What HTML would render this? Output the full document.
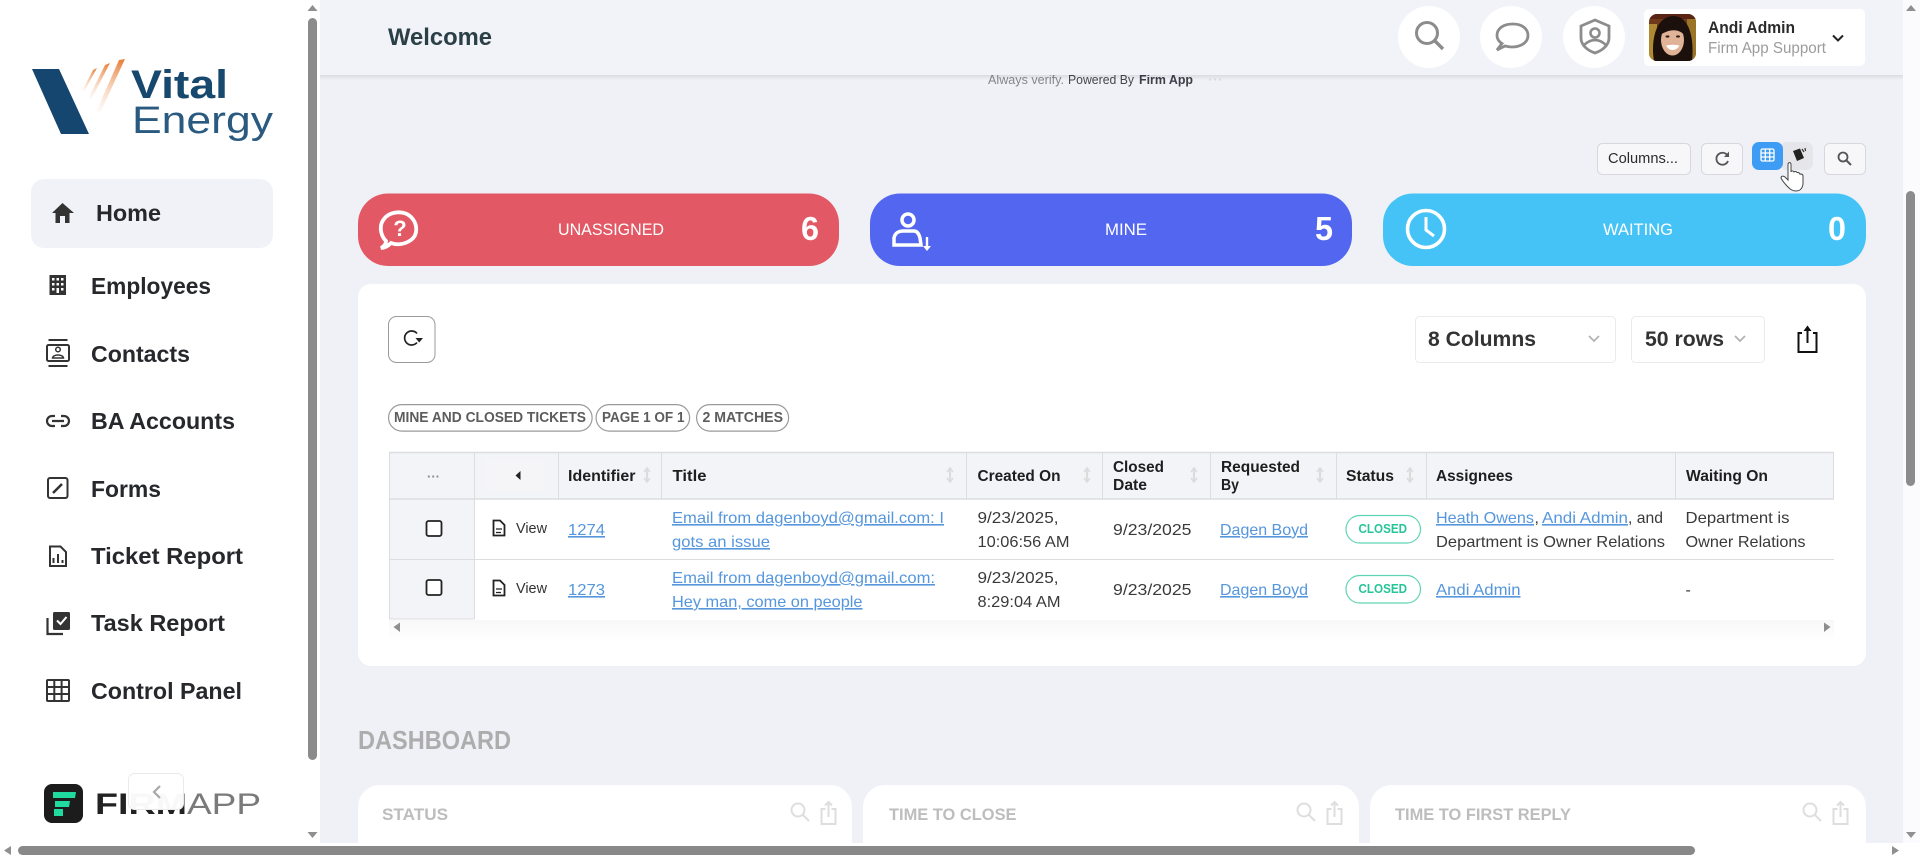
<!DOCTYPE html>
<html lang="en"><head><meta charset="utf-8"><title>Welcome</title>
<style>
html,body{margin:0;padding:0;width:1920px;height:858px;overflow:hidden;background:#f0f1f7}
svg{display:block;position:absolute;left:0;top:0;font-family:"Liberation Sans",Arial,sans-serif;filter:blur(.35px)}
.nav{font-size:23px;font-weight:700;fill:#26282c}
.th{font-size:16px;font-weight:700;fill:#1e1e1e}
.td{font-size:16px;fill:#3a3a3a}
.lk{font-size:16px;fill:#5596dc;text-decoration:underline}
.chip{font-size:14.5px;font-weight:700;fill:#5c5c5c}
.pill{font-size:12.5px;font-weight:700;fill:#27c49a}
.cl{font-size:17px;fill:#fff}
.num{font-size:33px;font-weight:700;fill:#fff}
.dl{font-size:17px;font-weight:700;fill:#bdbdbd}
</style></head><body>
<svg width="1920" height="858" viewBox="0 0 1920 858" xmlns="http://www.w3.org/2000/svg">
<defs>
<linearGradient id="or1" gradientUnits="userSpaceOnUse" x1="122" y1="60" x2="97" y2="112"><stop offset="0" stop-color="#e8803a"/><stop offset="1" stop-color="#f6d3bb" stop-opacity=".1"/></linearGradient>
<linearGradient id="or2" gradientUnits="userSpaceOnUse" x1="110" y1="64" x2="90" y2="100"><stop offset="0" stop-color="#e8803a"/><stop offset="1" stop-color="#f6d3bb" stop-opacity=".1"/></linearGradient>
<linearGradient id="or3" gradientUnits="userSpaceOnUse" x1="97" y1="69" x2="83" y2="92"><stop offset="0" stop-color="#e8803a"/><stop offset="1" stop-color="#f6d3bb" stop-opacity=".15"/></linearGradient>
<linearGradient id="hs" x1="0" y1="0" x2="0" y2="1"><stop offset="0" stop-color="#000" stop-opacity=".09"/><stop offset="1" stop-color="#000" stop-opacity="0"/></linearGradient>
<linearGradient id="fd" x1="0" y1="0" x2="0" y2="1"><stop offset="0" stop-color="#f8f8f8"/><stop offset="1" stop-color="#fff"/></linearGradient>
<clipPath id="av"><rect x="1649" y="14" width="47" height="47" rx="8"/></clipPath>
<g id="sort" fill="none" stroke="#dcdcdc" stroke-width="2.2"><path d="M0-6V6"/><path d="M-3-3 0-7 3-3M-3 3 0 7 3 3" stroke-width="1.6"/></g>
<g id="mag" fill="none" stroke="#dedede" stroke-width="2"><circle cx="-2" cy="-2" r="6.5"/><path d="M2.800 2.800 9 9"/></g>
<g id="shr" fill="none" stroke="#dedede" stroke-width="2"><path d="M-3-4H-7V11H7V-4H3M0 4V-11M-3.500-7.500 0-11 3.500-7.500"/></g>
</defs>

<!-- main background -->
<rect width="1920" height="858" fill="#f0f1f7"/>

<!-- powered by -->
<text x="988" y="84" font-size="12.500" fill="#85878d" textLength="76" lengthAdjust="spacingAndGlyphs">Always verify.</text>
<text x="1068" y="84" font-size="12.500" fill="#45474d" textLength="66" lengthAdjust="spacingAndGlyphs">Powered By</text>
<text x="1139" y="84" font-size="12.500" font-weight="700" fill="#3c4048" textLength="54" lengthAdjust="spacingAndGlyphs">Firm App</text>
<text x="1208" y="84" font-size="13" font-weight="700" fill="#dcdde2" textLength="15" lengthAdjust="spacingAndGlyphs">···</text>

<!-- header -->
<rect x="320" y="0" width="1583" height="75" fill="#f2f3f8"/>
<rect x="320" y="75" width="1583" height="5" fill="url(#hs)"/>
<text x="388" y="45" font-size="24" font-weight="700" fill="#2b3f47" textLength="104" lengthAdjust="spacingAndGlyphs">Welcome</text>
<circle cx="1429" cy="37" r="31" fill="#fff"/><circle cx="1511" cy="37" r="31" fill="#fff"/><circle cx="1594" cy="37" r="31" fill="#fff"/>
<g fill="none" stroke="#8c8c8c" stroke-width="3">
<circle cx="1427" cy="33" r="10.500"/><path d="M1435 41 1443 49" stroke-width="3.400"/>
<path d="M1497 50 1502 43.500C1498 41 1497 38 1497 35.500 1497 28 1504 24 1513 24 1521 24 1528 28 1528 35.500 1528 43 1520 47 1512 47 1509 47 1507 46.500 1505 46Z" stroke-width="2.800"/>
<path d="M1595 20 1609 26V38C1609 46 1601 51 1595 53 1589 51 1581 46 1581 38V26Z" stroke-width="2.800"/><circle cx="1595" cy="33" r="4.500" stroke-width="2.600"/><path d="M1584 45Q1595 35 1606 45" stroke-width="2.600"/>
</g>
<rect x="1644" y="9" width="221" height="57" rx="5" fill="#fff"/>
<g clip-path="url(#av)">
<rect x="1649" y="14" width="47" height="47" fill="#6e3a1c"/><rect x="1649" y="24" width="8" height="37" fill="#b08a32"/><rect x="1687" y="14" width="9" height="47" fill="#9a7426"/><rect x="1649" y="14" width="47" height="5" fill="#5a2414"/>
<path d="M1654 61C1651 44 1654 17 1673 16 1691 16 1694 42 1692 61Z" fill="#1c100d"/>
<ellipse cx="1672.500" cy="40" rx="11.500" ry="15.500" fill="#e0b298"/>
<path d="M1660 35C1664 25 1671 23 1675 24 1680 25 1684 29 1685 36 1680 29 1671 28 1660 35Z" fill="#1c100d"/>
<ellipse cx="1667.500" cy="36.500" rx="2" ry="1.100" fill="#33201a"/><ellipse cx="1678" cy="36.500" rx="2" ry="1.100" fill="#33201a"/>
<path d="M1666 45.500Q1672.500 44 1679.500 45.500 1677 50 1672.500 50 1668.500 50 1666 45.500Z" fill="#fff"/>
</g>
<text x="1708" y="33" font-size="16.500" font-weight="700" fill="#2b2b2b" textLength="87" lengthAdjust="spacingAndGlyphs">Andi Admin</text>
<text x="1708" y="53" font-size="15.500" fill="#9c9c9c" textLength="118" lengthAdjust="spacingAndGlyphs">Firm App Support</text>
<path d="M1833 35.500 1838 40.500 1843 35.500" fill="none" stroke="#222" stroke-width="2"/>

<!-- toolbar -->
<rect x="1597.500" y="143.500" width="93" height="31" rx="5" fill="#f7f7fa" stroke="#d8d8dc"/>
<text x="1608" y="163" font-size="15" fill="#2b2b2b" textLength="70" lengthAdjust="spacingAndGlyphs">Columns...</text>
<rect x="1701.500" y="143.500" width="41" height="31" rx="5" fill="#f7f7fa" stroke="#d8d8dc"/>
<path d="M1727.500 155.500A6 6 0 1 0 1728 161" fill="none" stroke="#555" stroke-width="1.800"/><path d="M1729 151.500V157H1724Z" fill="#555"/>
<rect x="1780" y="142" width="33" height="28" rx="7" fill="#e6e6ea"/>
<rect x="1752" y="142" width="31" height="28" rx="7" fill="#3f9cf5"/>
<g fill="none" stroke="#fff" stroke-width="1.300"><rect x="1761" y="149" width="13" height="12" rx="1.500"/><path d="M1765.300 149V161M1769.700 149V161M1761 153H1774M1761 157H1774"/></g>
<path d="M1793 151 1800 148.500 1804 158 1797 161Z" fill="#222"/><path d="M1802 149 1804 152M1805 148 1805.500 151" stroke="#333" stroke-width="1.200"/>
<path d="M1788 187C1785 184 1782 180 1781 178 1781 176 1783 175.500 1785 177L1788 180V164.500C1788 162 1791 162 1791 164.500V172C1791 170.500 1794 170.500 1794 172.500 1794 171 1797 171 1797 173 1797 172 1800 172.500 1800 174.500 1800.500 173.500 1803 174 1803 176V183C1803 187 1801 191 1796 191 1792 191 1790 189 1788 187Z" fill="#fff" stroke="#444" stroke-width="1"/>
<rect x="1824.500" y="143.500" width="41" height="31" rx="5" fill="#f7f7fa" stroke="#d8d8dc"/>
<circle cx="1843" cy="157" r="4.500" fill="none" stroke="#555" stroke-width="1.800"/><path d="M1846.500 160.500 1851 165" stroke="#555" stroke-width="2"/>

<!-- stat cards -->
<rect x="358" y="193.500" width="481" height="72.500" rx="30" fill="#e25864"/>
<rect x="870" y="193.500" width="482" height="72.500" rx="30" fill="#5366f0"/>
<rect x="1383" y="193.500" width="483" height="72.500" rx="30" fill="#45c3f6"/>
<path d="M381 248C385 246 386 243 386 241 380 235 379 225 384 219 390 211 404 210 411 217 418 224 418 235 411 240 404 245 396 245 391 243 388 246 385 248 381 248Z" fill="none" stroke="#fff" stroke-width="3.800"/>
<text x="400" y="236" font-size="22" font-weight="700" fill="#fff" text-anchor="middle">?</text>
<text x="558" y="235" class="cl" textLength="106" lengthAdjust="spacingAndGlyphs">UNASSIGNED</text>
<text x="801" y="240" class="num" textLength="18" lengthAdjust="spacingAndGlyphs">6</text>
<g fill="none" stroke="#fff"><circle cx="908" cy="220" r="6" stroke-width="3.500"/><path d="M894 245V238C895 233 899 231 903 231H914C917 231 919 234 920 238L921 245Z" stroke-width="3.500"/><path d="M927 237V248" stroke-width="2.400"/></g><path d="M923 246H931L927 251Z" fill="#fff"/>
<text x="1105" y="235" class="cl" textLength="42" lengthAdjust="spacingAndGlyphs">MINE</text>
<text x="1315" y="240" class="num" textLength="18" lengthAdjust="spacingAndGlyphs">5</text>
<circle cx="1426" cy="229" r="18.500" fill="none" stroke="#fff" stroke-width="3.600"/><path d="M1426 217V230L1434 236" fill="none" stroke="#fff" stroke-width="3"/>
<text x="1603" y="235" class="cl" textLength="70" lengthAdjust="spacingAndGlyphs">WAITING</text>
<text x="1828" y="240" class="num" textLength="18" lengthAdjust="spacingAndGlyphs">0</text>

<!-- table panel -->
<rect x="358" y="284" width="1508" height="382" rx="13" fill="#fff"/>
<rect x="388.500" y="316.500" width="46.500" height="46" rx="8" fill="#fff" stroke="#9a9a9a"/>
<path d="M417 333.500A7 7 0 1 0 417 342.500" fill="none" stroke="#222" stroke-width="1.700"/><path d="M415.500 338H423L419.200 342.500Z" fill="#222"/>
<rect x="1415.500" y="316.500" width="200" height="46" rx="4" fill="#fff" stroke="#ebebed"/>
<text x="1428" y="346" font-size="21" font-weight="700" fill="#333" textLength="108" lengthAdjust="spacingAndGlyphs">8 Columns</text>
<path d="M1589 336 1594 341 1599 336" fill="none" stroke="#b3b3b3" stroke-width="1.800"/>
<rect x="1631.500" y="316.500" width="133" height="46" rx="4" fill="#fff" stroke="#ebebed"/>
<text x="1645" y="346" font-size="21" font-weight="700" fill="#333" textLength="79" lengthAdjust="spacingAndGlyphs">50 rows</text>
<path d="M1735 336 1740 341 1745 336" fill="none" stroke="#b3b3b3" stroke-width="1.800"/>
<path d="M1802 333H1798.500V352H1816.500V333H1813M1807.500 343V328" fill="none" stroke="#111" stroke-width="2"/><path d="M1803.500 331 1807.500 325.500 1811.500 331Z" fill="#111"/>

<!-- chips -->
<g fill="#fff" stroke="#9a9a9a" stroke-width="1.200">
<rect x="388.600" y="404.600" width="203.500" height="26.500" rx="13.200"/><rect x="596.100" y="404.600" width="93.500" height="26.500" rx="13.200"/><rect x="696.600" y="404.600" width="92" height="26.500" rx="13.200"/></g>
<text x="394" y="422" class="chip" textLength="192" lengthAdjust="spacingAndGlyphs">MINE AND CLOSED TICKETS</text>
<text x="602" y="422" class="chip" textLength="82.500" lengthAdjust="spacingAndGlyphs">PAGE 1 OF 1</text>
<text x="702.500" y="422" class="chip" textLength="80.500" lengthAdjust="spacingAndGlyphs">2 MATCHES</text>

<!-- table -->
<rect x="389" y="452" width="1445" height="47" fill="#f3f4f8"/>
<rect x="389" y="499" width="85" height="120" fill="#f3f4f8"/>
<g stroke="#dcdde0" fill="none">
<path d="M389 452.500H1834" stroke-width="1.500"/><path d="M389 499H1834" stroke-width="1.500"/><path d="M389 559.500H1834"/><path d="M389 619H474"/>
<path d="M389.500 452V619M474.500 452V619"/>
<path d="M558.500 452V499M661.500 452V499M966.500 452V499M1102.500 452V499M1210.500 452V499M1336.500 452V499M1426.500 452V499M1675.500 452V499M1833.500 452V499"/>
</g>
<rect x="484" y="458" width="60" height="34" fill="#f5f5f8"/>
<text x="433.500" y="481" font-size="13" font-weight="700" fill="#8a8a8a" text-anchor="middle">···</text>
<path d="M520.500 471V480L515.500 475.500Z" fill="#222"/>
<text x="568" y="481" class="th" textLength="67.500" lengthAdjust="spacingAndGlyphs">Identifier</text><use href="#sort" x="647" y="475"/>
<text x="672.500" y="481" class="th" textLength="34" lengthAdjust="spacingAndGlyphs">Title</text><use href="#sort" x="950" y="475"/>
<text x="977.500" y="481" class="th" textLength="83" lengthAdjust="spacingAndGlyphs">Created On</text><use href="#sort" x="1087" y="475"/>
<text x="1113" y="472" class="th" textLength="51" lengthAdjust="spacingAndGlyphs">Closed</text><text x="1113" y="490" class="th" textLength="34" lengthAdjust="spacingAndGlyphs">Date</text><use href="#sort" x="1194" y="475"/>
<text x="1221" y="472" class="th" textLength="79" lengthAdjust="spacingAndGlyphs">Requested</text><text x="1221" y="490" class="th" textLength="18" lengthAdjust="spacingAndGlyphs">By</text><use href="#sort" x="1320" y="475"/>
<text x="1346" y="481" class="th" textLength="48" lengthAdjust="spacingAndGlyphs">Status</text><use href="#sort" x="1410" y="475"/>
<text x="1436" y="481" class="th" textLength="77" lengthAdjust="spacingAndGlyphs">Assignees</text>
<text x="1686" y="481" class="th" textLength="82" lengthAdjust="spacingAndGlyphs">Waiting On</text>

<!-- row 1 -->
<rect x="426.500" y="521" width="15" height="15" rx="2" fill="#fff" stroke="#222" stroke-width="1.800"/>
<rect x="485" y="516" width="67" height="24" rx="5" fill="#fff"/>
<g fill="none" stroke="#222" stroke-width="1.800"><path d="M493.500 521.500V535.500H504.500V525L500 520.500H493.500Z"/><path d="M496 529H502M496 532.500H501" stroke-width="1.300"/></g>
<text x="516" y="533" font-size="15" fill="#333" textLength="31" lengthAdjust="spacingAndGlyphs">View</text>
<text x="568" y="535" class="lk" textLength="37" lengthAdjust="spacingAndGlyphs">1274</text>
<text x="672" y="523" class="lk" textLength="272" lengthAdjust="spacingAndGlyphs">Email from dagenboyd@gmail.com: I</text>
<text x="672" y="547" class="lk" textLength="98" lengthAdjust="spacingAndGlyphs">gots an issue</text>
<text x="977.500" y="523" class="td" textLength="81" lengthAdjust="spacingAndGlyphs">9/23/2025,</text>
<text x="977.500" y="547" class="td" textLength="92" lengthAdjust="spacingAndGlyphs">10:06:56 AM</text>
<text x="1113" y="535" class="td" textLength="78.500" lengthAdjust="spacingAndGlyphs">9/23/2025</text>
<text x="1220" y="535" class="lk" textLength="88" lengthAdjust="spacingAndGlyphs">Dagen Boyd</text>
<rect x="1346" y="515.500" width="74.500" height="27.500" rx="13.700" fill="#fff" stroke="#5fd4b4" stroke-width="1.200"/>
<text x="1358.500" y="533" class="pill" textLength="48.500" lengthAdjust="spacingAndGlyphs">CLOSED</text>
<text x="1436" y="523" class="lk" textLength="98" lengthAdjust="spacingAndGlyphs">Heath Owens</text>
<text x="1534.500" y="523" class="td">,</text>
<text x="1542" y="523" class="lk" textLength="86" lengthAdjust="spacingAndGlyphs">Andi Admin</text>
<text x="1628" y="523" class="td" textLength="35" lengthAdjust="spacingAndGlyphs">, and</text>
<text x="1436" y="547" class="td" textLength="229" lengthAdjust="spacingAndGlyphs">Department is Owner Relations</text>
<text x="1685.500" y="523" class="td" textLength="104" lengthAdjust="spacingAndGlyphs">Department is</text>
<text x="1685.500" y="547" class="td" textLength="120" lengthAdjust="spacingAndGlyphs">Owner Relations</text>

<!-- row 2 -->
<rect x="426.500" y="580" width="15" height="15" rx="2" fill="#fff" stroke="#222" stroke-width="1.800"/>
<rect x="485" y="576" width="67" height="24" rx="5" fill="#fff"/>
<g fill="none" stroke="#222" stroke-width="1.800"><path d="M493.500 581.500V595.500H504.500V585L500 580.500H493.500Z"/><path d="M496 589H502M496 592.500H501" stroke-width="1.300"/></g>
<text x="516" y="593" font-size="15" fill="#333" textLength="31" lengthAdjust="spacingAndGlyphs">View</text>
<text x="568" y="595" class="lk" textLength="37" lengthAdjust="spacingAndGlyphs">1273</text>
<text x="672" y="583" class="lk" textLength="263" lengthAdjust="spacingAndGlyphs">Email from dagenboyd@gmail.com:</text>
<text x="672" y="607" class="lk" textLength="190.500" lengthAdjust="spacingAndGlyphs">Hey man, come on people</text>
<text x="977.500" y="583" class="td" textLength="81" lengthAdjust="spacingAndGlyphs">9/23/2025,</text>
<text x="977.500" y="607" class="td" textLength="83" lengthAdjust="spacingAndGlyphs">8:29:04 AM</text>
<text x="1113" y="595" class="td" textLength="78.500" lengthAdjust="spacingAndGlyphs">9/23/2025</text>
<text x="1220" y="595" class="lk" textLength="88" lengthAdjust="spacingAndGlyphs">Dagen Boyd</text>
<rect x="1346" y="575.500" width="74.500" height="27.500" rx="13.700" fill="#fff" stroke="#5fd4b4" stroke-width="1.200"/>
<text x="1358.500" y="593" class="pill" textLength="48.500" lengthAdjust="spacingAndGlyphs">CLOSED</text>
<text x="1436" y="595" class="lk" textLength="84.500" lengthAdjust="spacingAndGlyphs">Andi Admin</text>
<text x="1685.500" y="595" class="td">-</text>

<rect x="389" y="620" width="1445" height="22" fill="url(#fd)"/>
<path d="M400 622.500V632L393.500 627Z" fill="#8e8e8e"/><path d="M1824 622.500V632L1830.500 627Z" fill="#8e8e8e"/>

<!-- dashboard -->
<text x="358" y="749" font-size="26" font-weight="700" fill="#adadad" textLength="153" lengthAdjust="spacingAndGlyphs">DASHBOARD</text>
<rect x="358" y="785" width="494" height="90" rx="22" fill="#fff"/>
<rect x="863" y="785" width="496" height="90" rx="22" fill="#fff"/>
<rect x="1370" y="785" width="496" height="90" rx="22" fill="#fff"/>
<text x="382" y="820" class="dl" textLength="66" lengthAdjust="spacingAndGlyphs">STATUS</text>
<text x="889" y="820" class="dl" textLength="127.500" lengthAdjust="spacingAndGlyphs">TIME TO CLOSE</text>
<text x="1395" y="820" class="dl" textLength="176" lengthAdjust="spacingAndGlyphs">TIME TO FIRST REPLY</text>
<use href="#mag" x="800" y="812"/><use href="#shr" x="828.500" y="813"/>
<use href="#mag" x="1306" y="812"/><use href="#shr" x="1334.500" y="813"/>
<use href="#mag" x="1812" y="812"/><use href="#shr" x="1840.500" y="813"/>

<!-- sidebar -->
<rect x="0" y="0" width="320" height="858" fill="#fff"/>
<path d="M32 69H59L89 134H61Z" fill="#15466f"/>
<path d="M119 60 125 59 101 111 96 112Z" fill="url(#or1)"/>
<path d="M105 65 110 63 92 98 88 99Z" fill="url(#or2)"/>
<path d="M93 70 97 68 85 90 82 91Z" fill="url(#or3)"/>
<text x="131" y="98" font-size="40" font-weight="700" fill="#17496f" textLength="97" lengthAdjust="spacingAndGlyphs">Vital</text>
<text x="132" y="133" font-size="38" fill="#2b5a80" textLength="141" lengthAdjust="spacingAndGlyphs">Energy</text>

<rect x="31" y="179" width="242" height="69" rx="13" fill="#f1f2f8"/>
<path d="M62.500 203 52 213H55.500V223H60V216H65V223H69.500V213H74Z" fill="#333"/>
<text x="96" y="221" class="nav" textLength="65" lengthAdjust="spacingAndGlyphs">Home</text>

<rect x="49.500" y="275" width="16.500" height="20" fill="#333"/>
<g fill="#fff"><rect x="52" y="278" width="2.500" height="2.500"/><rect x="56.500" y="278" width="2.500" height="2.500"/><rect x="61" y="278" width="2.500" height="2.500"/><rect x="52" y="283" width="2.500" height="2.500"/><rect x="56.500" y="283" width="2.500" height="2.500"/><rect x="61" y="283" width="2.500" height="2.500"/><rect x="52" y="288" width="2.500" height="2.500"/><rect x="56.500" y="288" width="2.500" height="5"/><rect x="61" y="288" width="2.500" height="2.500"/></g>
<text x="91" y="294" class="nav" textLength="120" lengthAdjust="spacingAndGlyphs">Employees</text>

<g fill="none" stroke="#333" stroke-width="2"><path d="M48.500 340H67.500M48.500 366H67.500"/><rect x="47" y="345" width="22" height="16" rx="1.500"/><circle cx="58" cy="349.500" r="2.300" stroke-width="1.500"/><path d="M52.500 358C53 354 63 354 63.500 358Z" stroke-width="1.500"/></g>
<text x="91" y="362" class="nav" textLength="99" lengthAdjust="spacingAndGlyphs">Contacts</text>

<g fill="none" stroke="#333" stroke-width="2.200"><path d="M55 416H52A5 5 0 0 0 52 426H55M61 416H64A5 5 0 0 1 64 426H61M52 421H64"/></g>
<text x="91" y="429" class="nav" textLength="144" lengthAdjust="spacingAndGlyphs">BA Accounts</text>

<rect x="48" y="478" width="19.500" height="20" rx="2" fill="none" stroke="#333" stroke-width="2"/><path d="M53 493 62 484" stroke="#333" stroke-width="2.600"/>
<text x="91" y="497" class="nav" textLength="70" lengthAdjust="spacingAndGlyphs">Forms</text>

<g fill="none" stroke="#333" stroke-width="2"><path d="M50 547V566H66V552L60.500 546.500H50Z"/><path d="M53.500 563V558M58 563V554M62.500 563V560" stroke-width="2"/></g>
<text x="91" y="564" class="nav" textLength="152" lengthAdjust="spacingAndGlyphs">Ticket Report</text>

<rect x="53" y="612" width="17" height="18" rx="1.500" fill="#333"/><path d="M57 620.500 60.500 624 66.500 617" fill="none" stroke="#fff" stroke-width="2"/><path d="M47.500 618V634H63" fill="none" stroke="#333" stroke-width="2.200"/>
<text x="91" y="631" class="nav" textLength="134" lengthAdjust="spacingAndGlyphs">Task Report</text>

<g fill="none" stroke="#333" stroke-width="2"><rect x="47" y="680" width="22" height="21" rx="1"/><path d="M54.300 680V701M61.600 680V701M47 687H69M47 694H69"/></g>
<text x="91" y="699" class="nav" textLength="151" lengthAdjust="spacingAndGlyphs">Control Panel</text>

<!-- firm app logo -->
<rect x="44" y="784" width="39" height="39" rx="8" fill="#1c1c1c"/>
<path d="M53 792H76L75 798H53ZM55 801H70L69 807H55ZM54 809H63V816H54Z" fill="#1fdba0"/>
<text x="95" y="814" font-size="30" font-weight="700" fill="#222" textLength="92" lengthAdjust="spacingAndGlyphs">FIRM</text>
<text x="187" y="814" font-size="30" fill="#7a7a7a" textLength="74" lengthAdjust="spacingAndGlyphs">APP</text>
<rect x="128.500" y="773.500" width="55" height="36" rx="6" fill="#fff" fill-opacity=".97" stroke="#eaeaea"/>
<path d="M160 786 154 792 160 798" fill="none" stroke="#a8a8a8" stroke-width="2.200"/>

<!-- scrollbars -->
<rect x="1903" y="0" width="17" height="858" fill="#fbfbfd"/>
<rect x="0" y="843" width="1920" height="15" fill="#fff"/>
<rect x="308" y="18" width="9" height="742" rx="4.500" fill="#8b8b8b"/>
<path d="M307.500 11 312.500 5 317.500 11Z" fill="#8f8f8f"/><path d="M307.500 832 312.500 838 317.500 832Z" fill="#8f8f8f"/>
<rect x="1906" y="191" width="9" height="295" rx="4.500" fill="#8b8b8b"/>
<path d="M1906 11 1911 5 1916 11Z" fill="#8f8f8f"/><path d="M1906 832 1911 838 1916 832Z" fill="#8f8f8f"/>
<rect x="18" y="846" width="1677" height="9" rx="4.500" fill="#888"/>
<path d="M11 846V855L4 850.500Z" fill="#8f8f8f"/><path d="M1892 846V855L1899 850.500Z" fill="#8f8f8f"/>
</svg>
</body></html>
